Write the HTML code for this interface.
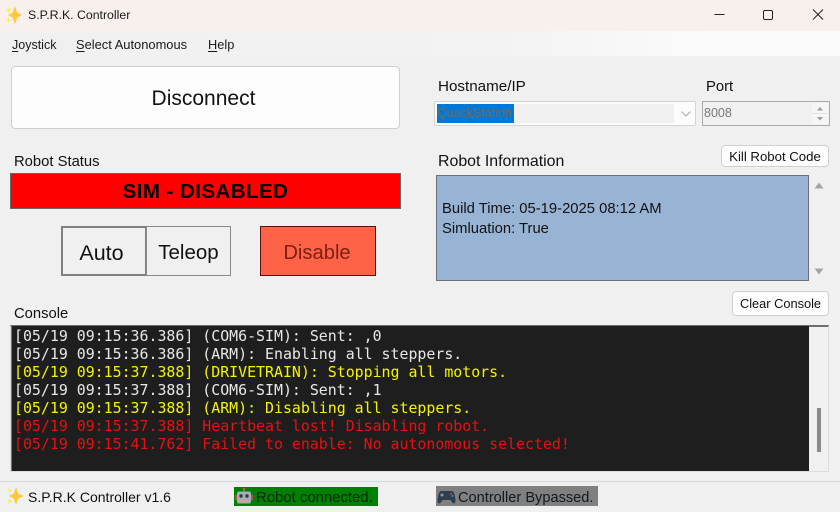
<!DOCTYPE html>
<html><head><meta charset="utf-8">
<style>
html,body{margin:0;padding:0;width:840px;height:512px;overflow:hidden;background:#f0f0f0}
body{position:relative;font-family:"Liberation Sans",sans-serif;color:#000}
.a{position:absolute;white-space:nowrap;box-sizing:border-box}
.c{display:flex;align-items:center;justify-content:center}
.btn{background:#fdfdfd;border:1px solid #d0d0d0;border-radius:4px}
.l{font-size:14.8px;line-height:18px;color:#111}
.m{font-size:12.5px;line-height:16px;color:#1a1a1a}
.log{font-family:"DejaVu Sans Mono",monospace;font-size:14.9px;line-height:18px;left:14px;white-space:pre}
.w{color:#e8e8e8}.y{color:#f4f400}.r{color:#e81010}
u{text-underline-offset:2px}
</style></head><body>
<div class="a" style="left:0;top:0;width:840px;height:31px;background:#f7f0ed"></div>
<div class="a" style="left:0;top:31px;width:840px;height:25px;background:linear-gradient(90deg,#f0f0f0 0,#f3f3f3 60%,#fbfbfb 85%,#fbfbfb 100%)"></div>
<svg class="a" style="left:5px;top:5px" width="18" height="20" viewBox="0 0 18 20"><path d="M10 1 L12.3 7.6 L17 10 L12.3 12.6 L10 19 L7.7 12.6 L3 10 L7.7 7.6Z" fill="#ffc83d"/><path d="M3.5 2 L4.4 4.4 L6.5 5.2 L4.4 6 L3.5 8.5 L2.6 6 L.8 5.2 L2.6 4.4Z M3.5 12 L4.4 14 L6 15 L4.4 16 L3.5 18 L2.6 16 L1 15 L2.6 14Z" fill="#fff04a"/></svg>
<div class="a" style="left:28px;top:7px;font-size:12.3px;line-height:16px;color:#1a1a1a">S.P.R.K. Controller</div>
<svg class="a" style="left:710px;top:5px" width="130" height="20" viewBox="0 0 130 20" fill="none" stroke="#222" stroke-width="1"><path d="M4.500 9.500H14.500"/><rect x="53.500" y="5.500" width="9" height="9" rx="1.500"/><path d="M103 4.500L113 14.500M113 4.500L103 14.500"/></svg>
<div class="a m" style="left:12px;top:37px"><u>J</u>oystick</div>
<div class="a m" style="left:76px;top:37px;font-size:12.9px"><u>S</u>elect Autonomous</div>
<div class="a m" style="left:208px;top:37px;font-size:12.800px"><u>H</u>elp</div>

<div class="a btn c" style="left:11px;top:66px;width:389px;height:63px;font-size:21px;color:#111;padding:2px 4px 0 0">Disconnect</div>
<div class="a l" style="left:438px;top:78px;font-size:15.200px">Hostname/IP</div>
<div class="a l" style="left:706px;top:78px">Port</div>
<div class="a" style="left:434px;top:101px;width:262px;height:25px;background:#fcfcfc;border:1px solid #d4d4d4;border-radius:2px"></div>
<div class="a" style="left:437px;top:104px;width:237px;height:19px;background:#f0f0f0"></div>
<div class="a" style="left:437px;top:104px;width:77px;height:19px;background:#0078d4;color:#6d6d6d;font-size:12.500px;line-height:19px;overflow:hidden">QuackStation</div>
<svg class="a" style="left:680px;top:109px" width="14" height="10" fill="none" stroke="#a8a8a8" stroke-width="1"><path d="M1.500 2.500L6 7L10.500 2.500"/></svg>
<div class="a" style="left:702px;top:101px;width:128px;height:25px;background:#f0f0f0;border:1px solid #aaa"></div>
<div class="a" style="left:704px;top:105px;font-size:12.500px;line-height:16px;color:#777">8008</div>
<div class="a" style="left:812px;top:103px;width:16px;height:21px;background:#f6f6f6"></div>
<svg class="a" style="left:812px;top:103px" width="16" height="21"><path d="M5 7.500L8 4L11 7.500Z M5 14L8 17.500L11 14Z" fill="#9a9a9a"/><path d="M0 10.500H16" stroke="#e4e4e4"/></svg>

<div class="a l" style="left:14px;top:153px">Robot Status</div>
<div class="a c" style="left:10px;top:173px;width:391px;height:36px;background:#fe0000;border:1px solid #666;font-size:20.500px;letter-spacing:.45px;font-weight:bold;color:#0a0000;padding-top:2px">SIM - DISABLED</div>
<div class="a c" style="left:61px;top:226px;width:86px;height:50px;background:#f0f0f0;border:2px solid #808080;font-size:21.500px;color:#111;padding:4px 5px 0 0">Auto</div>
<div class="a c" style="left:146px;top:226px;width:85px;height:50px;background:#f0f0f0;border:1px solid #8a8a8a;font-size:20.500px;color:#111;padding-top:4px">Teleop</div>
<div class="a c" style="left:260px;top:226px;width:116px;height:50px;background:#ff6347;border:1px solid #5c1010;font-size:20.200px;color:#7c1f12;padding:4px 2px 0 0">Disable</div>

<div class="a l" style="left:438px;top:153px;font-size:15.900px">Robot Information</div>
<div class="a btn c" style="left:721px;top:145px;width:108px;height:22px;font-size:13.200px;color:#111">Kill Robot Code</div>
<div class="a" style="left:436px;top:175px;width:373px;height:106px;background:#98b4d4;border:1px solid #6a6f78"></div>
<div class="a" style="left:442px;top:199px;font-size:14.800px;line-height:20px;color:#111">Build Time: 05-19-2025 08:12 AM<br>Simluation: True</div>
<svg class="a" style="left:812px;top:179px" width="14" height="100"><path d="M2.500 9.500L7 3.500L11.500 9.500Z M2.500 89.500L11.500 89.500L7 95.500Z" fill="#a4a4a4"/></svg>

<div class="a l" style="left:14px;top:305px">Console</div>
<div class="a btn c" style="left:732px;top:291px;width:97px;height:25px;font-size:12.800px;color:#111">Clear Console</div>
<div class="a" style="left:10px;top:325px;width:819px;height:147px;background:#f0f0f0;border:1px solid #dcdcdc;border-top:2px solid #6e6e6e"></div>
<div class="a" style="left:11px;top:326px;width:798px;height:145px;background:#1e1e1e;border-left:1px solid #777"></div>
<div class="a" style="left:817px;top:408px;width:4px;height:44px;background:#8a8a8a"></div>
<div class="a log w" style="top:327px">[05/19 09:15:36.386] (COM6-SIM): Sent: ,0</div>
<div class="a log w" style="top:345px">[05/19 09:15:36.386] (ARM): Enabling all steppers.</div>
<div class="a log y" style="top:363px">[05/19 09:15:37.388] (DRIVETRAIN): Stopping all motors.</div>
<div class="a log w" style="top:381px">[05/19 09:15:37.388] (COM6-SIM): Sent: ,1</div>
<div class="a log y" style="top:399px">[05/19 09:15:37.388] (ARM): Disabling all steppers.</div>
<div class="a log r" style="top:417px">[05/19 09:15:37.388] Heartbeat lost! Disabling robot.</div>
<div class="a log r" style="top:435px">[05/19 09:15:41.762] Failed to enable: No autonomous selected!</div>

<div class="a" style="left:0;top:481px;width:840px;height:1px;background:#d8d8d8"></div>
<svg class="a" style="left:6px;top:486px" width="18" height="20" viewBox="0 0 18 20"><path d="M10 1 L12.3 7.600 L18 10 L12.300 12.600 L10 19 L7.700 12.600 L3 10 L7.700 7.600Z" fill="#ffc83d"/><path d="M3.500 1 L4.400 3.400 L6.500 4.200 L4.400 5 L3.500 7.500 L2.600 5 L.8 4.200 L2.600 3.400Z M3.500 12 L4.400 14 L6 15 L4.400 16 L3.500 18 L2.600 16 L1 15 L2.600 14Z" fill="#fff04a"/></svg>
<div class="a" style="left:28px;top:489px;font-size:14px;line-height:17px;color:#111">S.P.R.K Controller v1.6</div>
<div class="a" style="left:234px;top:487px;width:144px;height:19px;background:#008000"></div>
<svg class="a" style="left:235px;top:487px" width="18" height="19" viewBox="0 0 18 19"><circle cx="9" cy="2" r="1.300" fill="#d05050"/><rect x="8.500" y="2" width="1" height="3" fill="#888"/><rect x="0" y="8" width="2" height="5" fill="#c05050"/><rect x="16" y="8" width="2" height="5" fill="#c05050"/><rect x="2" y="4.500" width="14" height="12" rx="2" fill="#a4aeb4"/><circle cx="6" cy="9" r="1.700" fill="#2b3a42"/><circle cx="12" cy="9" r="1.700" fill="#2b3a42"/><rect x="5" y="13" width="8" height="2" fill="#d9a0a0"/></svg>
<div class="a" style="left:256px;top:490px;font-size:14.900px;line-height:17px;color:#0a260a">Robot connected.</div>
<div class="a" style="left:436px;top:486px;width:162px;height:20px;background:#808080"></div>
<svg class="a" style="left:437px;top:489px" width="19" height="16" viewBox="0 0 19 16"><path d="M4 2H15C17 2 18.500 8 18.500 12C18.500 15 16 15 14.500 12.500L13.500 11H5.500L4.500 12.500C3 15 .5 15 .5 12C.5 8 2 2 4 2Z" fill="#2f3e4a"/><circle cx="5" cy="6" r="1.500" fill="#8899a6"/><circle cx="14" cy="5" r=".9" fill="#e05050"/><circle cx="15.500" cy="7" r=".9" fill="#40a0e0"/></svg>
<div class="a" style="left:458px;top:490px;font-size:14.600px;line-height:17px;color:#101820">Controller Bypassed.</div>
</body></html>
